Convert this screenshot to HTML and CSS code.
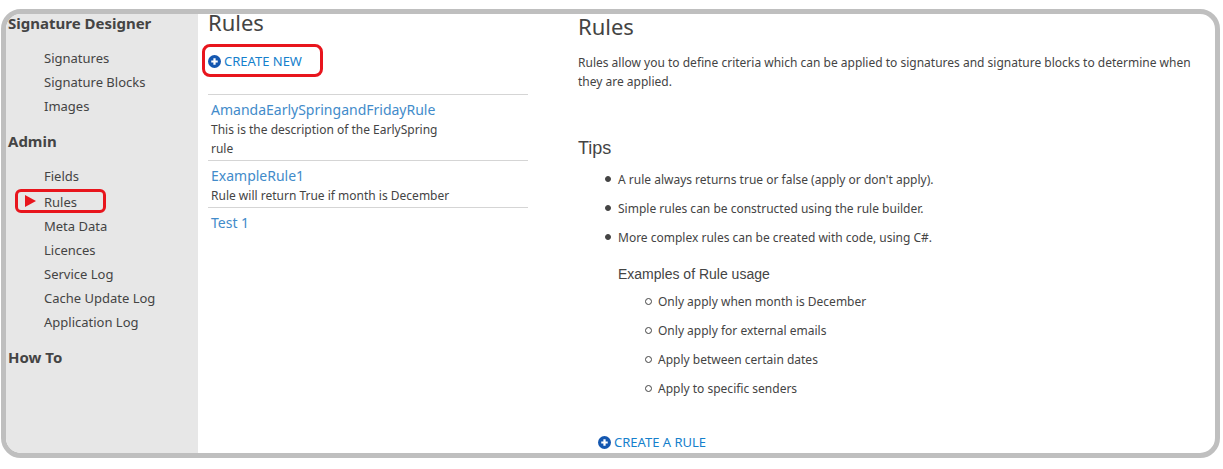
FILE: index.html
```html
<!DOCTYPE html>
<html lang="en">
<head>
  <meta charset="UTF-8">
  <title>Rules</title>
  <meta name="viewport" content="width=device-width,initial-scale=1.0">
  <link rel="stylesheet" href="styles.css">
</head>
<body>
  <div class="frame">
    <nav class="sidebar">
      <h2>Signature Designer</h2>
      <ul>
        <li><a href="#">Signatures</a></li>
        <li><a href="#">Signature Blocks</a></li>
        <li><a href="#">Images</a></li>
      </ul>
      <h2>Admin</h2>
      <ul>
        <li><a href="#">Fields</a></li>
        <li class="active"><a href="#">Rules</a></li>
        <li><a href="#">Meta Data</a></li>
        <li><a href="#">Licences</a></li>
        <li><a href="#">Service Log</a></li>
        <li><a href="#">Cache Update Log</a></li>
        <li><a href="#">Application Log</a></li>
      </ul>
      <h2>How To</h2>
    </nav>

    <section class="list">
      <h1>Rules</h1>
      <a class="create marked" href="#">
        <svg class="plus" viewBox="0 0 14 14"><circle cx="7" cy="7" r="7" fill="#1457b0"/><path d="M7 3.5v7M3.5 7h7" stroke="#fff" stroke-width="2.4"/></svg>
        CREATE NEW
      </a>
      <ul class="rules">
        <li>
          <a href="#">AmandaEarlySpringandFridayRule</a>
          <p>This is the description of the EarlySpring rule</p>
        </li>
        <li>
          <a href="#">ExampleRule1</a>
          <p>Rule will return True if month is December</p>
        </li>
        <li>
          <a href="#">Test 1</a>
        </li>
      </ul>
    </section>

    <main class="help">
      <h1>Rules</h1>
      <p>Rules allow you to define criteria which can be applied to signatures and signature blocks to determine when they are applied.</p>
      <h3>Tips</h3>
      <ul class="tips">
        <li>A rule always returns true or false (apply or don't apply).</li>
        <li>Simple rules can be constructed using the rule builder.</li>
        <li>More complex rules can be created with code, using C#.</li>
      </ul>
      <div class="examples">
        <h4>Examples of Rule usage</h4>
        <ul class="tips hollow">
          <li>Only apply when month is December</li>
          <li>Only apply for external emails</li>
          <li>Apply between certain dates</li>
          <li>Apply to specific senders</li>
        </ul>
      </div>
      <a class="create" href="#">
        <svg class="plus" viewBox="0 0 14 14"><circle cx="7" cy="7" r="7" fill="#1457b0"/><path d="M7 3.5v7M3.5 7h7" stroke="#fff" stroke-width="2.4"/></svg>
        CREATE A RULE
      </a>
    </main>
  </div>
</body>
</html>
```
FILE: styles.css
```css
*, *::before{
  padding: 0;
  margin: 0;
  box-sizing: border-box;
}
body{
  display: flex;
  min-height: 100vh;
  padding: 9px 3px 11px 1px;
  background-color: #fff;
  color: #444;
  font-family: "Noto Sans", "Open Sans", sans-serif;
  font-size: 12px;
  line-height: 19px;
}
ul{
  list-style: none;
}
a{
  text-decoration: none;
}

.frame{
  flex: 1;
  display: grid;
  grid-template-columns: 192px 330px 1fr;
  border: 5px solid #bfbfbf;
  border-radius: 20px;
}

/* left menu */
.sidebar{
  background-color: #e7e7e7;
  border-radius: 15px 0 0 15px;
}
.sidebar h2{
  padding-left: 2px;
  font-size: 15px;
  line-height: 18px;
}
.sidebar ul{
  margin: 14px 0;
}
.sidebar li{
  position: relative;
  padding-left: 38px;
  font-size: 13px;
  line-height: 24px;
}
.sidebar a{
  color: #444;
}
.sidebar .active{
  margin-top: 2px;
}
/* red ring around the current item */
.sidebar .active::before{
  content: "";
  position: absolute;
  left: 9px;
  top: -1px;
  width: 91px;
  height: 24px;
  border: 3px solid #e8151d;
  border-radius: 6px;
}
.sidebar .active::after{
  content: "";
  position: absolute;
  left: 19px;
  top: 5px;
  border-left: 11px solid #e8151d;
  border-top: 6px solid transparent;
  border-bottom: 6px solid transparent;
}

h1{
  font-size: 22px;
  font-weight: normal;
}
.create{
  position: relative;
  display: flex;
  width: fit-content;
  align-items: center;
  gap: 3px;
  color: #1580cc;
  font-size: 13px;
  line-height: 20px;
}
.plus{
  width: 13px;
  height: 13px;
}
.marked::before{
  content: "";
  position: absolute;
  left: -6px;
  top: -7px;
  width: 121px;
  height: 33px;
  border: 3px solid #e8151d;
  border-radius: 8px;
}

/* rule list */
.list{
  padding-left: 10px;
}
.list h1{
  margin-bottom: 21px;
  line-height: 16px;
}
.rules{
  margin-top: 23px;
}
.rules li{
  padding: 4px 3px 2px 3px;
  border-top: 1px solid #d5d5d5;
}
.rules a{
  display: block;
  color: #428bca;
  font-size: 14px;
  line-height: 21px;
}
.rules p{
  max-width: 250px;
}

/* help text */
.help{
  padding-left: 50px;
}
.help h1{
  margin-bottom: 15px;
  line-height: 24px;
}
.help h3{
  margin: 47px 0 12px 0;
  font-family: "Liberation Sans", Arial, sans-serif;
  font-size: 18px;
  font-weight: normal;
  line-height: 20px;
}
.tips{
  padding-left: 40px;
}
.tips li{
  position: relative;
  margin-bottom: 10px;
}
.tips li::before{
  content: "";
  position: absolute;
  left: -13px;
  top: 6px;
  width: 6px;
  height: 6px;
  border: 1px solid #444;
  border-radius: 50%;
  background-color: #444;
}
.tips.hollow li::before{
  width: 7px;
  height: 7px;
  background-color: #fff;
}
.examples{
  padding: 7px 0 0 40px;
}
.examples h4{
  margin-bottom: 8px;
  font-family: "Liberation Sans", Arial, sans-serif;
  font-size: 14px;
  font-weight: normal;
  line-height: 20px;
}
.help .create{
  margin: 34px 0 0 20px;
}
```
